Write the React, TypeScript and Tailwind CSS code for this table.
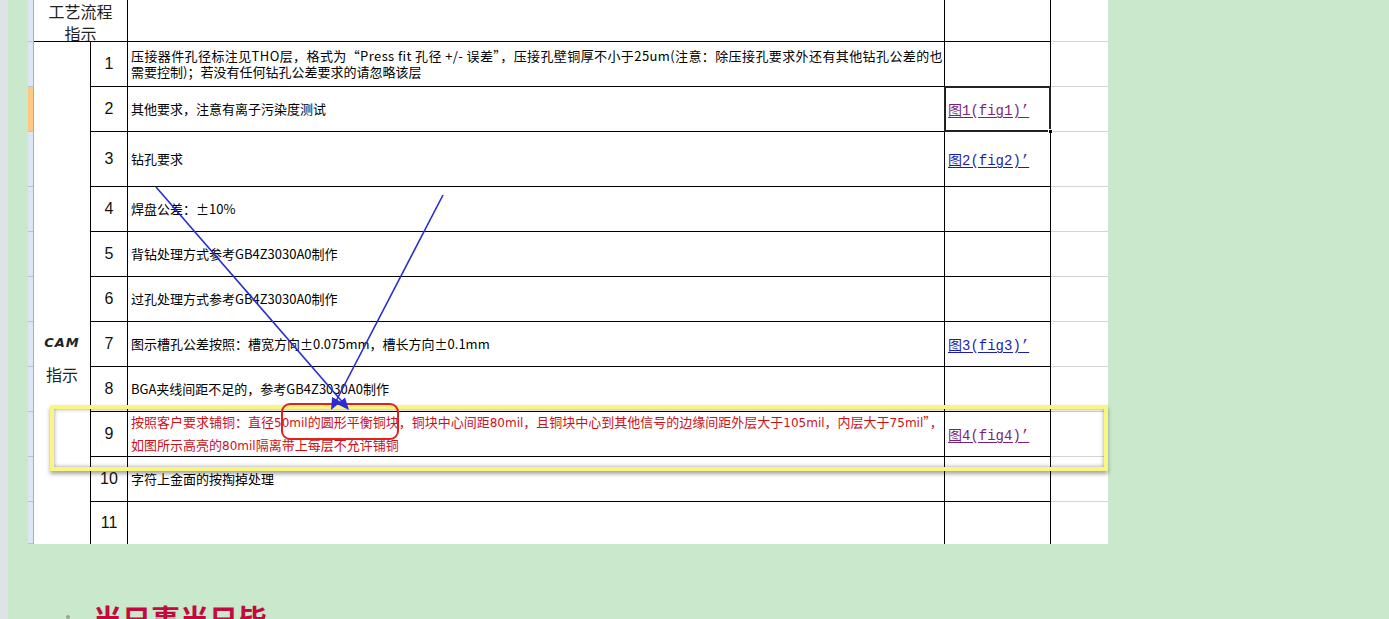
import type { ReactNode } from "react";

interface SheetRow {
  n: number;
  h: number;
  text: ReactNode;
  link?: { label: string; visited: boolean };
  red?: boolean;
}

const mil = (v: string) => (
  <span className="font-['DejaVu_Sans',sans-serif] text-[12px]">{v}</span>
);

const rows: SheetRow[] = [
  {
    n: 1,
    h: 45,
    text: (
      <>
        <div className="tracking-[0.4px]">压接器件孔径标注见THO层，格式为“Press fit 孔径 +/- 误差”，压接孔壁铜厚不小于25um(注意：除压接孔要求外还有其他钻孔公差的也</div>
        <div>需要控制)；若没有任何钻孔公差要求的请忽略该层</div>
      </>
    ),
  },
  { n: 2, h: 45, text: "其他要求，注意有离子污染度测试", link: { label: "1(fig1)’", visited: true } },
  { n: 3, h: 55, text: "钻孔要求", link: { label: "2(fig2)’", visited: false } },
  { n: 4, h: 45, text: "焊盘公差：±10%" },
  { n: 5, h: 45, text: "背钻处理方式参考GB4Z3030A0制作" },
  { n: 6, h: 45, text: "过孔处理方式参考GB4Z3030A0制作" },
  { n: 7, h: 45, text: "图示槽孔公差按照：槽宽方向±0.075mm，槽长方向±0.1mm", link: { label: "3(fig3)’", visited: false } },
  { n: 8, h: 45, text: "BGA夹线间距不足的，参考GB4Z3030A0制作" },
  {
    n: 9,
    h: 45,
    red: true,
    text: (
      <>
        <div>
          按照客户要求铺铜：直径{mil("50mil")}的圆形平衡铜块，铜块中心间距{mil("80mil")}，且铜块中心到其他信号的边缘间距外层大于{mil("105mil")}，内层大于{mil("75mil")}”，
        </div>
        <div>如图所示高亮的{mil("80mil")}隔离带上每层不允许铺铜</div>
      </>
    ),
    link: { label: "4(fig4)’", visited: true },
  },
  { n: 10, h: 45, text: "字符上金面的按掏掉处理" },
  { n: 11, h: 42, text: "" },
];

const stripHeights = [42, ...rows.map((r) => r.h)];

function LinkText({ label, visited }: { label: string; visited: boolean }) {
  return (
    <span
      className={`font-['Liberation_Mono','Noto_Sans_CJK_SC',monospace] text-[14px] leading-none underline underline-offset-2 ${
        visited ? "text-[#7a1f7a]" : "text-[#1d1da8]"
      }`}
    >
      图{label}
    </span>
  );
}

export default function App() {
  return (
    <div className="relative flex h-[619px] w-[1389px] overflow-hidden bg-[#cae8cc] font-['Noto_Sans_CJK_SC',sans-serif] text-black">
      {/* window edge */}
      <div className="h-full w-[8px] shrink-0 bg-[#dfe2e6]" />

      <div className="flex flex-1 flex-col">
        <div className="flex h-[544px] shrink-0">
          <div className="w-[20px] shrink-0" />

          {/* row header strip */}
          <div className="flex w-[6px] shrink-0 flex-col border-r border-[#9db3cc] bg-[#dce6f4]">
            {stripHeights.map((h, i) => (
              <div
                key={i}
                style={{ height: h }}
                className={`shrink-0 border-b border-[#b3c3d8] ${i === 2 ? "bg-[#fdc982]" : ""}`}
              />
            ))}
          </div>

          {/* sheet */}
          <div className="grid w-[1074px] shrink-0 grid-cols-[57px_37px_817px_106px_57px] grid-rows-[42px_45px_45px_55px_45px_45px_45px_45px_45px_45px_45px_42px] bg-white">
            <div className="col-span-2 overflow-hidden border-r border-b border-black text-center text-[16px] leading-[22px] text-[#222]">
              <div>工艺流程</div>
              <div>指示</div>
            </div>
            <div className="border-r border-b border-black" />
            <div className="border-r border-b border-black" />
            <div className="border-b border-[#d4d4d4]" />

            <div className="row-span-11 flex flex-col items-center border-r border-black pt-[292px]">
              <div className="font-['DejaVu_Sans',sans-serif] text-[13px] font-bold italic leading-[18px] tracking-[1px] text-[#222]">
                CAM
              </div>
              <div className="mt-[12px] text-[16px] leading-[20px] text-[#222]">指示</div>
            </div>

            {rows.map((r) => {
              const last = r.n === 11;
              const line = last ? "border-r border-black" : "border-r border-b border-black";
              return [
                <div
                  key={`n${r.n}`}
                  className={`flex items-center justify-center font-['Liberation_Sans',sans-serif] text-[16px] text-[#111] ${line}`}
                >
                  {r.n}
                </div>,
                <div
                  key={`t${r.n}`}
                  className={`flex flex-col justify-center whitespace-nowrap pl-[3px] text-[13px] ${
                    r.red ? "leading-[21px] text-[#cc1018]" : "leading-[16px]"
                  } ${line}`}
                >
                  {r.text}
                </div>,
                <div key={`l${r.n}`} className={`relative flex items-center pt-[4px] pl-[3px] ${line}`}>
                  {r.link && <LinkText {...r.link} />}
                  {r.n === 2 && (
                    <>
                      <div className="absolute -top-[1px] -left-[1px] -right-[1px] -bottom-[1px] border-2 border-[#222]" />
                      <div className="absolute -right-[3px] -bottom-[3px] h-[5px] w-[5px] border border-white bg-black" />
                    </>
                  )}
                </div>,
                <div key={`r${r.n}`} className={last ? "" : "border-b border-[#d4d4d4]"} />,
              ];
            })}
          </div>
        </div>

        {/* bottom title */}
        <div className="flex items-start pt-[54px] pl-[58px]">
          <div className="mt-[17px] h-[4px] w-[4px] rounded-full bg-[#9aa59b]" />
          <div className="ml-[23px] text-[29px] font-bold leading-[40px] text-[#c20a3e]">当日事当日毕</div>
        </div>
      </div>

      {/* annotations drawn over the sheet */}
      <div className="pointer-events-none absolute left-[50px] top-[405px] h-[66px] w-[1058px] border-4 border-[#f9f57e] shadow-[0_3px_4px_rgba(0,0,0,0.35),inset_0_0_4px_rgba(0,0,0,0.4)]" />
      <div className="pointer-events-none absolute left-[281px] top-[403px] h-[37px] w-[118px] rounded-[9px] border-2 border-[#e3211c]" />
      <svg className="pointer-events-none absolute inset-0" width="1389" height="619" viewBox="0 0 1389 619">
        <line x1="156" y1="187" x2="345" y2="405" stroke="#2b2bd2" strokeWidth="1.6" />
        <line x1="443" y1="195" x2="334" y2="405" stroke="#2b2bd2" strokeWidth="1.6" />
        <polygon points="349,410 337.4,404.2 345,397.6" fill="#2b2bd2" />
        <polygon points="331,410 332.1,397.1 340.9,401.7" fill="#2b2bd2" />
      </svg>
    </div>
  );
}
